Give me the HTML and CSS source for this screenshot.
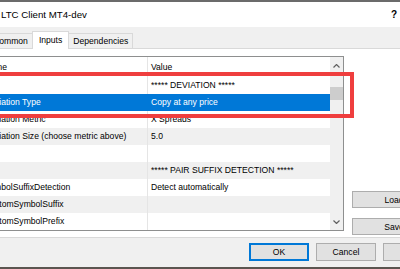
FILE: index.html
```html
<!DOCTYPE html>
<html>
  <head>
    <meta charset="UTF-8">
    <title>LTC Client MT4-dev</title>
    <link rel="stylesheet" href="styles.css">
  </head>
<body>
	<div class="dialog">
		<div class="titlebar">
			<span class="title">LTC Client MT4-dev</span>
			<span class="help">?</span>
		</div>
		<div class="tabstrip">
			<div class="tab">Common</div>
			<div class="tab active">Inputs</div>
			<div class="tab">Dependencies</div>
		</div>
		<div class="page">
			<div class="list">
				<div class="grid">
					<div class="row head"><div class="name">Name</div><div class="value">Value</div></div>
					<div class="row"><div class="name"></div><div class="value">***** DEVIATION *****</div></div>
					<div class="row selected"><div class="name">Deviation Type</div><div class="value">Copy at any price</div></div>
					<div class="row"><div class="name">Deviation Metric</div><div class="value">X Spreads</div></div>
					<div class="row alt"><div class="name">Deviation Size (choose metric above)</div><div class="value">5.0</div></div>
					<div class="row"><div class="name"></div><div class="value"></div></div>
					<div class="row alt"><div class="name"></div><div class="value">***** PAIR SUFFIX DETECTION *****</div></div>
					<div class="row"><div class="name">SymbolSuffixDetection</div><div class="value">Detect automatically</div></div>
					<div class="row alt"><div class="name">CustomSymbolSuffix</div><div class="value"></div></div>
					<div class="row"><div class="name">CustomSymbolPrefix</div><div class="value"></div></div>
				</div>
				<div class="scrollbar">
					<div class="arrow">
						<svg width="7" height="4" viewBox="0 0 7 4"><polyline points="0.5,3.5 3.5,0.5 6.5,3.5" fill="none" stroke="#606060" stroke-width="1.2"/></svg>
					</div>
					<div class="track"><div class="thumb"></div></div>
					<div class="arrow">
						<svg width="7" height="4" viewBox="0 0 7 4"><polyline points="0.5,0.5 3.5,3.5 6.5,0.5" fill="none" stroke="#606060" stroke-width="1.2"/></svg>
					</div>
				</div>
			</div>
			<div class="side">
				<button class="btn wide">Load</button>
				<button class="btn wide">Save</button>
			</div>
		</div>
		<div class="footer">
			<button class="btn default">OK</button>
			<button class="btn">Cancel</button>
			<button class="btn">Reset</button>
		</div>
	</div>
	<div class="highlight"></div>
</body>
</html>
```

FILE: styles.css
```css
*{
	box-sizing: border-box;
}
body{
	margin: 0;
	width: 400px;
	height: 269px;
	overflow: hidden;
	position: relative;
	background: #f0f0f0;
	font-family: "Liberation Sans", Arial, sans-serif;
	font-size: 8.6px;
	color: #000;
}
.dialog{
	margin-left: -50px;
	width: 450px;
	border-top: 2px solid #6b6b6b;
}
.titlebar{
	height: 25px;
	background: #fff;
	display: flex;
	align-items: center;
	justify-content: space-between;
	padding: 0 3px 0 51px;
	font-size: 9.7px;
}
.help{
	font-weight: bold;
	font-size: 10px;
}
/* tabs */
.tabstrip{
	height: 21px;
	display: flex;
	align-items: flex-end;
	padding-left: 38px;
}
.tab{
	height: 15px;
	line-height: 14px;
	padding: 0 4px;
	margin-right: -1px;
	border: 1px solid #d9d9d9;
	border-bottom: none;
	background: #f0f0f0;
	white-space: nowrap;
}
.tab.active{
	position: relative;
	z-index: 1;
	height: 18px;
	line-height: 17px;
	padding: 0 6px;
	margin-bottom: -1px;
	background: #fff;
}
/* tab page */
.page{
	height: 190px;
	display: flex;
	padding: 7px 0 6px 30px;
	background: #fff;
	border-top: 1px solid #d9d9d9;
	border-bottom: 1px solid #d9d9d9;
}
.list{
	flex: none;
	width: 364px;
	height: 175px;
	display: flex;
	border: 1px solid #8e8f8f;
}
.grid{
	flex: 1;
	overflow: hidden;
}
.row{
	display: flex;
	height: 17px;
	line-height: 17px;
	background: #fff;
}
.row.head{
	height: 20px;
	line-height: 20px;
}
.row.alt{
	background: #f0f0f0;
}
.row.selected{
	background: #0078d7;
	color: #fff;
}
.name{
	flex: none;
	width: 166px;
	padding-left: 3px;
	white-space: nowrap;
	overflow: hidden;
}
.value{
	flex: 1;
	padding-left: 3px;
	border-left: 1px solid #e5e5e5;
	white-space: nowrap;
	overflow: hidden;
}
.row.selected .value{
	border-left-color: #0078d7;
}
.scrollbar{
	flex: none;
	width: 13px;
	display: flex;
	flex-direction: column;
	background: #f0f0f0;
}
.arrow{
	height: 17px;
	display: flex;
	align-items: center;
	justify-content: center;
}
.track{
	flex: 1;
}
.thumb{
	margin-top: 13px;
	height: 13px;
	background: #cdcdcd;
}
.side{
	flex: none;
	display: flex;
	flex-direction: column;
	gap: 10px;
	padding: 135px 0 0 8px;
}
/* buttons */
.btn{
	flex: none;
	width: 60px;
	height: 18px;
	padding: 0;
	font: inherit;
	color: #000;
	background: #e1e1e1;
	border: 1px solid #adadad;
}
.btn.wide{
	width: 84px;
	height: 17px;
}
.btn.default{
	border-color: #0078d7;
	box-shadow: inset 0 0 0 1px #0078d7;
}
.footer{
	height: 31px;
	display: flex;
	gap: 7px;
	padding: 5px 0 0 299px;
	border-bottom: 2px solid #5b5550;
}
.highlight{
	position: absolute;
	left: -10px;
	top: 72px;
	width: 364px;
	height: 46px;
	border: 4px solid #ef3e3e;
}
```
